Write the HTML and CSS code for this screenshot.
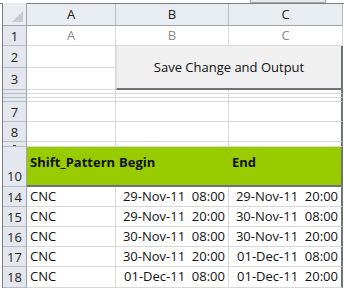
FILE: index.html
```html
<!DOCTYPE html>
<html lang="en">
<head>
    <meta charset="UTF-8">
    <title>Shift Sheet</title>
    <link rel="stylesheet" href="styles.css">
</head>
<body>
    <div class="topbar">
        <div class="tab"></div>
    </div>

    <div class="sheet">
        <!-- column headers -->
        <div class="corner"><span class="tri"></span></div>
        <div class="colhead">A</div>
        <div class="colhead">B</div>
        <div class="colhead">C</div>

        <!-- row 1 -->
        <div class="rowhead">1</div>
        <div class="cell center muted">A</div>
        <div class="cell center muted">B</div>
        <div class="cell center muted">C</div>

        <!-- rows 2-3 with the button -->
        <div class="rowhead">2</div>
        <div class="cell"></div>
        <button class="save-btn">Save Change and Output</button>
        <div class="rowhead">3</div>
        <div class="cell"></div>

        <!-- hidden rows 4-6 -->
        <div class="rowhead"></div><div class="cell"></div><div class="cell"></div><div class="cell last"></div>
        <div class="rowhead"></div><div class="cell"></div><div class="cell"></div><div class="cell last"></div>
        <div class="rowhead"></div><div class="cell"></div><div class="cell"></div><div class="cell last"></div>

        <div class="rowhead">7</div><div class="cell"></div><div class="cell"></div><div class="cell last"></div>
        <div class="rowhead">8</div><div class="cell"></div><div class="cell"></div><div class="cell last"></div>
        <div class="rowhead"><span class="cut"></span></div><div class="cell"></div><div class="cell"></div><div class="cell last"></div>

        <!-- header row -->
        <div class="rowhead bottom">10</div>
        <div class="head">Shift_Pattern</div>
        <div class="head">Begin</div>
        <div class="head last">End</div>

        <div class="rowhead">14</div>
        <div class="cell">CNC</div>
        <div class="cell date">29-Nov-11  08:00</div>
        <div class="cell date last">29-Nov-11  20:00</div>

        <div class="rowhead">15</div>
        <div class="cell">CNC</div>
        <div class="cell date">29-Nov-11  20:00</div>
        <div class="cell date last">30-Nov-11  08:00</div>

        <div class="rowhead">16</div>
        <div class="cell">CNC</div>
        <div class="cell date">30-Nov-11  08:00</div>
        <div class="cell date last">30-Nov-11  20:00</div>

        <div class="rowhead">17</div>
        <div class="cell">CNC</div>
        <div class="cell date">30-Nov-11  20:00</div>
        <div class="cell date last">01-Dec-11  08:00</div>

        <div class="rowhead">18</div>
        <div class="cell">CNC</div>
        <div class="cell date">01-Dec-11  08:00</div>
        <div class="cell date last">01-Dec-11  20:00</div>
    </div>
</body>
</html>
```

FILE: styles.css
```css
* {
    margin: 0;
    padding: 0;
    box-sizing: border-box;
}

body {
    background-color: #ffffff;
    font-family: 'Open Sans', 'Liberation Sans', sans-serif;
    font-size: 12px;
    color: #111;
    overflow: hidden;
}

.topbar {
    height: 4px;
    border-bottom: 1px solid #7b7f85;
    position: relative;
}

.tab {
    position: absolute;
    left: 250px;
    top: 0;
    width: 76px;
    height: 3px;
    background-color: #e8e8e8;
    border: 1px solid #a6a6a6;
    border-top: none;
}

.sheet {
    display: grid;
    grid-template-columns: 24px 89px 113px 114px;
    grid-template-rows: 23px 20px 22px 22px 4px 4px 4px 20px 20px 5px 40px 20px 20px 20px 20px 21px;
    margin-left: 2px;
    border-left: 1px solid #7b7f85;
    margin-top: -1px;
}

.corner {
    background-color: #e9ecf0;
    border-right: 1px solid #9ea4ab;
    border-bottom: 1px solid #9ea4ab;
    position: relative;
}

.tri {
    position: absolute;
    right: 3px;
    bottom: 3px;
    width: 0;
    height: 0;
    border-left: 11px solid transparent;
    border-bottom: 11px solid #c7cbd0;
}

.colhead {
    background-color: #e9ecf0;
    border-right: 1px solid #b6bcc3;
    border-bottom: 1px solid #9ea4ab;
    text-align: center;
    line-height: 22px;
    font-size: 13px;
    color: #222;
}

.rowhead {
    background-color: #e4e8ee;
    border-right: 1px solid #9ea4ab;
    border-bottom: 1px solid #b6bcc3;
    font-size: 13px;
    color: #222;
    text-align: center;
    display: flex;
    align-items: center;
    justify-content: center;
    overflow: hidden;
}

.rowhead.bottom {
    align-items: flex-end;
    padding-bottom: 1px;
}

.cut {
    width: 3px;
    height: 1px;
    margin-top: 2px;
    background-color: #444;
}

.cell {
    border-right: 1px solid #d8d8d8;
    border-bottom: 1px solid #d8d8d8;
    padding: 0 3px;
    font-size: 13px;
    line-height: 19px;
    white-space: pre;
    overflow: hidden;
}

.cell.last {
    border-right: 2px solid #6f7378;
}

.center {
    text-align: center;
}

.muted {
    color: #8a8a8a;
}

.date {
    text-align: right;
}

.save-btn {
    grid-column: 3 / 5;
    grid-row: 3 / 5;
    background-color: #f0f0f0;
    border: none;
    border-left: 1px solid #e0e0e0;
    border-right: 2px solid #6f7378;
    border-bottom: 2px solid #6f7378;
    font-family: 'Open Sans', 'Liberation Sans', sans-serif;
    font-size: 13px;
    color: #111;
    cursor: pointer;
}

.head {
    background-color: #99cc00;
    border-bottom: 2px solid #6f7378;
    font-weight: bold;
    font-size: 13px;
    padding: 6px 3px 0;
    color: #111;
}

.head.last {
    border-right: 2px solid #6f7378;
}
```
